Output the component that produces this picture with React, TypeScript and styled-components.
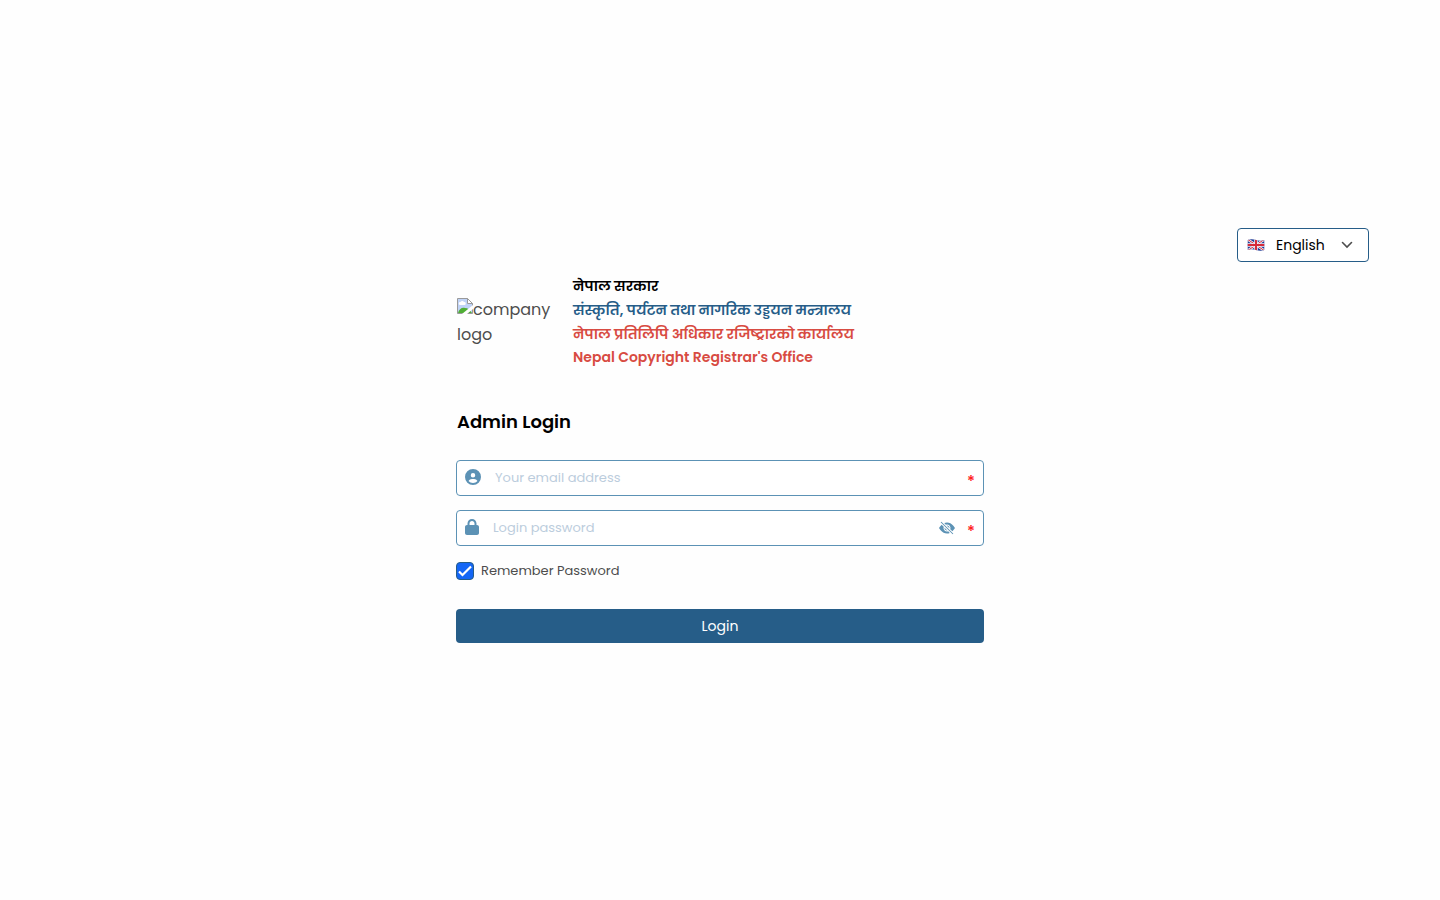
import React, { useState } from "react";
import styled, { createGlobalStyle } from "styled-components";
import { FaCircleUser, FaLock } from "react-icons/fa6";
import { BsEyeSlashFill, BsEyeFill } from "react-icons/bs";

const colors = {
  navy: "#265d88",
  steel: "#5c92b5",
  red: "#d84b42",
  text: "#4d4d4d",
  hint: "#bccddd",
};

const GlobalStyle = createGlobalStyle`
  *, *::before, *::after { box-sizing: border-box; }
  body {
    margin: 0;
    background: #fefefe;
    color: ${colors.text};
    font-family: Poppins, "Noto Sans", sans-serif;
    font-size: 13px;
  }
  button, input, select { font: inherit; color: inherit; }
  h1, h2, p { margin: 0; }
`;

const Page = styled.main`
  display: flex;
  flex-direction: column;
  justify-content: center;
  min-height: 100vh;
  padding: 0 71px;
`;

const TopBar = styled.header`
  display: flex;
  justify-content: flex-end;
`;

const Language = styled.label`
  display: grid;
  grid-template-columns: 18px 1fr 12px;
  align-items: center;
  width: 132px;
  height: 34px;
  padding: 0 15px 0 9px;
  border: 1px solid ${colors.navy};
  border-radius: 4px;
  background: #fff;
  color: ${colors.text};
`;

const LanguageSelect = styled.select`
  appearance: none;
  min-width: 0;
  height: 32px;
  padding: 0 0 0 11px;
  border: 0;
  outline: 0;
  background: transparent;
  color: #000;
  font-size: 14px;
`;

const Panel = styled.section`
  width: 100%;
  max-width: 528px;
  margin: 0 auto;
  padding: 12px 0 29px;
`;

const Brand = styled.div`
  display: flex;
  align-items: center;
  gap: 20px;
  padding-left: 1px;
`;

const Logo = styled.div`
  width: 96px;
  padding-top: 2px;
  font-size: 16px;
  line-height: 25px;

  svg { vertical-align: 1px; }
`;

const BrandLine = styled.p<{ $color: string }>`
  color: ${(p) => p.$color};
  font-size: 14px;
  font-weight: 600;
  line-height: 24px;
`;

const BrandName = styled(BrandLine)`
  line-height: 22px;
`;

const Title = styled.h1`
  margin: 40px 0 24px;
  padding-left: 1px;
  color: #000;
  font-size: 18px;
  font-weight: 600;
  line-height: 28px;
`;

const Form = styled.form`
  display: flex;
  flex-direction: column;
`;

const Field = styled.div`
  display: flex;
  align-items: center;
  height: 36px;
  margin-bottom: 14px;
  padding: 0 8px;
  border: 1px solid ${colors.steel};
  border-radius: 4px;
  background: #fff;
  color: ${colors.steel};
`;

const FieldIcon = styled.label`
  display: flex;
  padding-bottom: 2px;
`;

const LockIcon = styled(FaLock)`
  width: 14px;
  height: 16px;
`;

const Input = styled.input`
  flex: 1;
  min-width: 0;
  height: 32px;
  margin-left: 12px;
  padding: 0 2px;
  border: 0;
  outline: 0;
  background: transparent;
  color: ${colors.text};

  &::placeholder { color: ${colors.hint}; opacity: 1; }
`;

const Reveal = styled.button`
  display: flex;
  padding: 0;
  border: 0;
  background: none;
  color: ${colors.steel};
  cursor: pointer;
`;

const Required = styled.span`
  margin-left: 12px;
  padding-top: 8px;
  color: #ff1f1f;
  font-size: 16px;
  font-weight: 500;
  line-height: 20px;
`;

const Remember = styled.label`
  display: flex;
  align-items: center;
  gap: 7px;
  height: 20px;
  margin: 1px 0 28px;
`;

const Check = styled.input`
  appearance: none;
  width: 18px;
  height: 18px;
  margin: 0;
  border: 1px solid ${colors.navy};
  border-radius: 4px;
  background: #fff;

  &:checked {
    background: #1466f5 url("data:image/svg+xml,%3Csvg xmlns='http://www.w3.org/2000/svg' viewBox='0 0 16 16'%3E%3Cpath d='M2 8.5l3.5 3.5L14 3.5' fill='none' stroke='white' stroke-width='2.2'/%3E%3C/svg%3E") center / 16px no-repeat;
  }
`;

const Submit = styled.button`
  height: 34px;
  border: 0;
  border-radius: 4px;
  background: ${colors.navy};
  color: #fff;
  font-size: 14px;
  cursor: pointer;
`;

const Flag = () => (
  <svg width="18" height="14" viewBox="0 0 36 28" aria-hidden="true">
    <clipPath id="flag"><path d="M1 4Q9 1 18 4T35 4V24Q27 27 18 24T1 24Z" /></clipPath>
    <g clipPath="url(#flag)">
      <path fill="#1d3a94" d="M0 0h36v28H0z" />
      <path d="M0 2l36 24M36 2L0 26" stroke="#f3f3fa" strokeWidth="5" />
      <path d="M0 2l36 24M36 2L0 26" stroke="#d52b3a" strokeWidth="2" />
      <path d="M18 0v28M0 14h36" stroke="#f3f3fa" strokeWidth="7" />
      <path d="M18 0v28M0 14h36" stroke="#d52b3a" strokeWidth="4" />
    </g>
  </svg>
);

const Chevron = () => (
  <svg width="12" height="12" viewBox="0 0 12 12" aria-hidden="true">
    <path d="M1.5 3.5L6 8l4.5-4.5" fill="none" stroke="currentColor" strokeWidth="1.6" strokeLinecap="round" />
  </svg>
);

const MissingImage = () => (
  <svg width="16" height="16" viewBox="0 0 16 16" aria-hidden="true">
    <path d="M.5.5h10l5 5v10H.5z" fill="#c0d3f7" stroke="#9a9a9a" />
    <path d="M3 7a1.5 1.5 0 0 1 .5-3 2 2 0 0 1 3.5 0 1.5 1.5 0 0 1 .5 3z" fill="#fff" />
    <path d="M1 15c1-4 4-6 7-5 3 0 5 2 7 5z" fill="#4fae35" />
    <path d="M5 16L16 7v4l-6 5z" fill="#fefefe" />
    <path d="M10.5.5v5h5z" fill="#fff" stroke="#9a9a9a" />
  </svg>
);

export default function App() {
  const [visible, setVisible] = useState(false);
  return (
    <>
      <GlobalStyle />
      <Page>
        <TopBar>
          <Language>
            <Flag />
            <LanguageSelect aria-label="Language" defaultValue="en">
              <option value="en">English</option>
              <option value="ne">नेपाली</option>
            </LanguageSelect>
            <Chevron />
          </Language>
        </TopBar>
        <Panel>
          <Brand>
            <Logo>
              <MissingImage />company logo
            </Logo>
            <div>
              <BrandLine $color="#000">नेपाल सरकार</BrandLine>
              <BrandLine $color={colors.navy}>संस्कृति, पर्यटन तथा नागरिक उड्डयन मन्त्रालय</BrandLine>
              <BrandLine $color={colors.red}>नेपाल प्रतिलिपि अधिकार रजिष्ट्रारको कार्यालय</BrandLine>
              <BrandName $color={colors.red}>Nepal Copyright Registrar's Office</BrandName>
            </div>
          </Brand>
          <Title>Admin Login</Title>
          <Form onSubmit={(e) => e.preventDefault()}>
            <Field>
              <FieldIcon htmlFor="email"><FaCircleUser size={16} /></FieldIcon>
              <Input id="email" type="email" aria-label="Email" placeholder="Your email address" />
              <Required>*</Required>
            </Field>
            <Field>
              <FieldIcon htmlFor="password"><LockIcon /></FieldIcon>
              <Input id="password" type={visible ? "text" : "password"} aria-label="Password" placeholder="Login password" />
              <Reveal type="button" aria-label="Show password" onClick={() => setVisible(!visible)}>
                {visible ? <BsEyeFill size={16} /> : <BsEyeSlashFill size={16} />}
              </Reveal>
              <Required>*</Required>
            </Field>
            <Remember>
              <Check type="checkbox" defaultChecked />
              Remember Password
            </Remember>
            <Submit type="submit">Login</Submit>
          </Form>
        </Panel>
      </Page>
    </>
  );
}
